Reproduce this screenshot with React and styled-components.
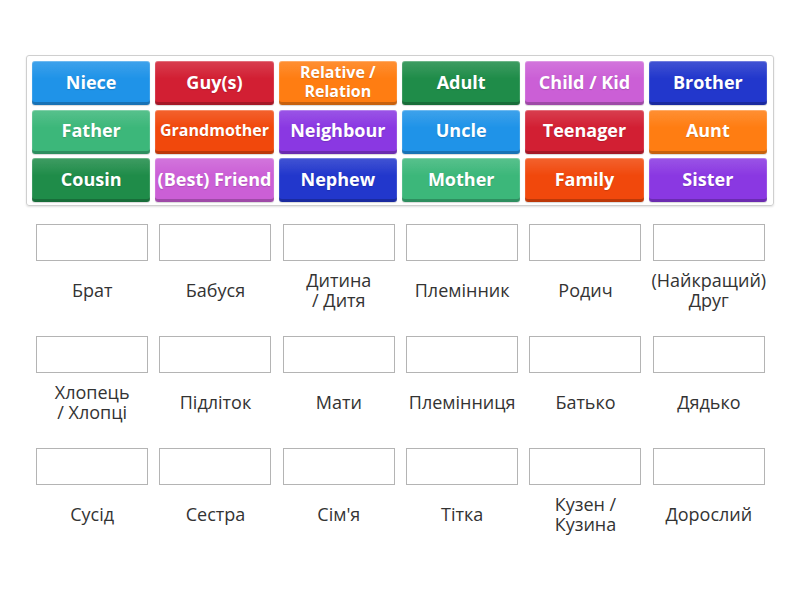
import React from 'react';
import styled, { createGlobalStyle } from 'styled-components';

const GlobalStyle = createGlobalStyle`
  body {
    margin: 0;
    background: #fff;
    font-family: "Open Sans", "Noto Sans", sans-serif;
  }
`;

const Page = styled.main`
  width: 800px;
  height: 600px;
  padding: 55px 26px 0;
  box-sizing: border-box;
`;

const Bank = styled.section`
  display: grid;
  grid-template-columns: repeat(6, 1fr);
  grid-auto-rows: 44px;
  gap: 4.5px 5px;
  padding: 5px 6px 3px 5px;
  border: 1px solid #cfcfcf;
  border-radius: 3px;
  box-shadow: 0 1px 2px rgba(0, 0, 0, 0.12);
`;

const Tile = styled.div`
  display: flex;
  align-items: center;
  justify-content: center;
  text-align: center;
  padding: 0 2px 3px;
  border-radius: 3px;
  color: #fff;
  font-weight: 700;
  font-size: ${p => (p.$small ? '16px' : '18px')};
  line-height: ${p => (p.$small ? '19px' : '22px')};
  text-shadow: 0 1px 1px rgba(0, 0, 0, 0.15);
  background: linear-gradient(to bottom, rgba(255, 255, 255, 0.14), rgba(255, 255, 255, 0) 40%),
    ${p => p.$color};
  box-shadow: inset 0 -3px 0 rgba(0, 0, 0, 0.22), inset 0 1px 0 rgba(255, 255, 255, 0.25),
    inset 1px 0 0 rgba(255, 255, 255, 0.12), inset -1px 0 0 rgba(255, 255, 255, 0.12),
    0 1px 1px rgba(0, 0, 0, 0.15);
  white-space: nowrap;
`;

const Targets = styled.section`
  display: grid;
  grid-template-columns: repeat(6, 1fr);
  column-gap: 5px;
  padding: 18px 6px 0 7px;
`;

const Slot = styled.div`
  display: flex;
  flex-direction: column;
  align-items: center;
  height: 112px;
`;

const DropBox = styled.div`
  width: 112px;
  height: 37px;
  flex-shrink: 0;
  box-sizing: border-box;
  border: 1px solid #b4b4b4;
  background: #fff;
`;

const Label = styled.div`
  height: 58px;
  display: flex;
  align-items: center;
  justify-content: center;
  text-align: center;
  font-size: 18px;
  line-height: 20px;
  color: #333;
  white-space: nowrap;
`;

const BLUE = '#1f93e8';
const RED = '#d21f33';
const ORANGE = '#ff7d12';
const DARK_GREEN = '#1f8c49';
const PINK = '#cb5fd6';
const NAVY = '#2237cc';
const GREEN = '#3cb77a';
const FLAME = '#f1480c';
const PURPLE = '#8a38e2';

const tiles = [
  ['Niece', BLUE],
  ['Guy(s)', RED],
  ['Relative /\nRelation', ORANGE, true],
  ['Adult', DARK_GREEN],
  ['Child / Kid', PINK],
  ['Brother', NAVY],
  ['Father', GREEN],
  ['Grandmother', FLAME, true],
  ['Neighbour', PURPLE],
  ['Uncle', BLUE],
  ['Teenager', RED],
  ['Aunt', ORANGE],
  ['Cousin', DARK_GREEN],
  ['(Best) Friend', PINK],
  ['Nephew', NAVY],
  ['Mother', GREEN],
  ['Family', FLAME],
  ['Sister', PURPLE],
];

const labels = [
  'Брат', 'Бабуся', 'Дитина\n/ Дитя', 'Племінник', 'Родич', '(Найкращий)\nДруг',
  'Хлопець\n/ Хлопці', 'Підліток', 'Мати', 'Племінниця', 'Батько', 'Дядько',
  'Сусід', 'Сестра', "Сім'я", 'Тітка', 'Кузен /\nКузина', 'Дорослий',
];

const lines = text =>
  text.split('\n').map((line, i) => (
    <React.Fragment key={i}>
      {i > 0 && <br />}
      {line}
    </React.Fragment>
  ));

export default function App() {
  return (
    <Page>
      <GlobalStyle />
      <Bank>
        {tiles.map(([text, color, small]) => (
          <Tile key={text} $color={color} $small={small}>
            {lines(text)}
          </Tile>
        ))}
      </Bank>
      <Targets>
        {labels.map(text => (
          <Slot key={text}>
            <DropBox />
            <Label>{lines(text)}</Label>
          </Slot>
        ))}
      </Targets>
    </Page>
  );
}
